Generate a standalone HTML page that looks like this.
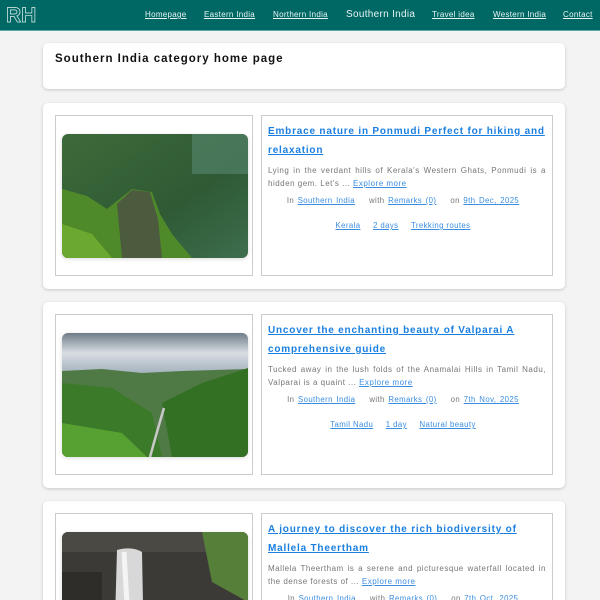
<!DOCTYPE html>
<html style="height:600px;overflow:hidden"><head><meta charset="utf-8"><style>
*{margin:0;padding:0;box-sizing:border-box}
body{width:600px;height:600px;overflow:hidden;background:#f3f3f3;font-family:"Liberation Sans",sans-serif}
#w{position:relative;width:600px;height:600px;overflow:hidden}
.hdr{position:absolute;left:0;top:0;width:600px;height:31px;background:#006864;border-bottom:1px solid #5fa8a4}
.logo{position:absolute;left:6px;top:4px;font-size:21px;font-weight:bold;color:#006864;-webkit-text-stroke:0.7px #e0f0ee}
.nav a{position:absolute;top:10px;font-size:8px;color:#e8f4f3;text-decoration:underline;letter-spacing:0.3px}
.nav .cur{top:9px;font-size:10px;text-decoration:none;letter-spacing:0.3px}
.card{position:absolute;left:43px;width:522px;background:#fff;border-radius:5px;box-shadow:0 1px 3px rgba(0,0,0,.18)}
.t1{position:absolute;left:12px;top:10px;font-size:11.5px;font-weight:bold;letter-spacing:1px;color:#111}
.lb{position:absolute;left:12px;top:12px;width:198px;height:161px;border:1px solid #ccc}
.rb{position:absolute;left:218px;top:12px;width:292px;height:161px;border:1px solid #ccc}
.img{position:absolute;left:6px;top:18px;width:186px;height:124px;border-radius:6px;overflow:hidden;box-shadow:0 1px 4px rgba(0,0,0,.15)}
.ti{position:absolute;left:6px;top:7px;width:282px;font-size:10px;font-weight:bold;letter-spacing:0.8px;line-height:18.5px;color:#1a7fe0}
.ti span{text-decoration:underline}
.ds{position:absolute;left:6px;top:48px;width:278px;font-size:8px;line-height:13px;letter-spacing:.5px;color:#777;text-align:justify}
a{color:#3b8de0;text-decoration:underline}
.mt{position:absolute;left:-4px;top:80px;width:290px;text-align:center;font-size:7.8px;color:#777;letter-spacing:.4px;word-spacing:1px}
.mt b{display:inline-block;width:14px}
.tg{position:absolute;left:-4px;top:105px;width:290px;text-align:center;font-size:7.8px;letter-spacing:.4px}
.tg a{margin:0 5px}
</style></head><body><div id="w">
<div class="hdr"><div class="logo">RH</div>
<div class="nav">
<a style="left:145px">Homepage</a><a style="left:204px">Eastern India</a><a style="left:273px">Northern India</a><a class="cur" style="left:346px">Southern India</a><a style="left:432px">Travel idea</a><a style="left:493px">Western India</a><a style="left:563px">Contact</a>
</div></div>

<div class="card" style="top:43px;height:46px"><div class="t1">Southern India category home page</div></div>

<div class="card" style="top:103px;height:186px">
<div class="lb"><div class="img"><svg width="186" height="124">
<defs><linearGradient id="g1" x1="0" y1="0" x2="1" y2="1"><stop offset="0" stop-color="#3e6a3a"/><stop offset=".6" stop-color="#2f5a34"/><stop offset="1" stop-color="#3d6e4f"/></linearGradient></defs>
<rect width="186" height="124" fill="url(#g1)"/>
<rect x="130" width="56" height="40" fill="#5d8f7b" opacity=".5"/>
<path d="M0 55 L25 62 L45 75 L70 55 L90 58 L98 80 L110 100 L130 124 L0 124Z" fill="#4f8a2a"/>
<path d="M55 70 L70 56 L88 58 L96 85 L100 124 L60 124Z" fill="#4c5a3e"/>
<path d="M0 90 L30 100 L50 124 L0 124Z" fill="#6aa830"/>
</svg></div></div>
<div class="rb">
<div class="ti"><span>Embrace nature in Ponmudi Perfect for hiking and relaxation</span></div>
<div class="ds">Lying in the verdant hills of Kerala's Western Ghats, Ponmudi is a hidden gem. Let's ... <a>Explore more</a></div>
<div class="mt">In <a>Southern India</a><b></b>with <a>Remarks (0)</a><b></b>on <a>9th Dec, 2025</a></div>
<div class="tg"><a>Kerala</a> <a>2 days</a> <a>Trekking routes</a></div>
</div></div>

<div class="card" style="top:302px;height:186px">
<div class="lb"><div class="img"><svg width="186" height="124">
<defs><linearGradient id="s2" x1="0" y1="0" x2="0" y2="1"><stop offset="0" stop-color="#6f7c88"/><stop offset=".5" stop-color="#d8dde2"/><stop offset="1" stop-color="#a5b2bd"/></linearGradient></defs>
<rect width="186" height="40" fill="url(#s2)"/>
<path d="M0 38 L40 36 L80 40 L120 38 L186 36 L186 124 L0 124Z" fill="#4f7a45"/>
<path d="M0 50 L50 55 L90 80 L100 124 L0 124Z" fill="#3b7a28"/>
<path d="M186 35 L140 50 L100 70 L110 124 L186 124Z" fill="#347024"/>
<path d="M0 90 L60 100 L85 124 L0 124Z" fill="#57a032"/>
<path d="M102 75 Q96 95 88 124" stroke="#c8c8c8" stroke-width="2.5" fill="none"/>
</svg></div></div>
<div class="rb">
<div class="ti"><span>Uncover the enchanting beauty of Valparai A comprehensive guide</span></div>
<div class="ds">Tucked away in the lush folds of the Anamalai Hills in Tamil Nadu, Valparai is a quaint ... <a>Explore more</a></div>
<div class="mt">In <a>Southern India</a><b></b>with <a>Remarks (0)</a><b></b>on <a>7th Nov, 2025</a></div>
<div class="tg"><a>Tamil Nadu</a> <a>1 day</a> <a>Natural beauty</a></div>
</div></div>

<div class="card" style="top:501px;height:99px;overflow:hidden;border-radius:5px 5px 0 0">
<div class="lb"><div class="img"><svg width="186" height="124">
<rect width="186" height="124" fill="#3b3a36"/>
<rect x="0" y="0" width="186" height="20" fill="#4a4944"/>
<path d="M140 0 L186 0 L186 70 L150 50Z" fill="#56803a"/>
<path d="M55 18 Q70 14 80 20 L82 124 L52 124Z" fill="#d8d8d8"/>
<path d="M62 20 L68 124" stroke="#f4f4f4" stroke-width="5"/>
<rect x="0" y="40" width="40" height="84" fill="#2e2d2a"/>
</svg></div></div>
<div class="rb">
<div class="ti"><span>A journey to discover the rich biodiversity of Mallela Theertham</span></div>
<div class="ds">Mallela Theertham is a serene and picturesque waterfall located in the dense forests of ... <a>Explore more</a></div>
<div class="mt">In <a>Southern India</a><b></b>with <a>Remarks (0)</a><b></b>on <a>7th Oct, 2025</a></div>
<div class="tg"><a>Andhra Pradesh</a> <a>1 day</a> <a>Waterfalls</a></div>
</div></div>
</div></body></html>
